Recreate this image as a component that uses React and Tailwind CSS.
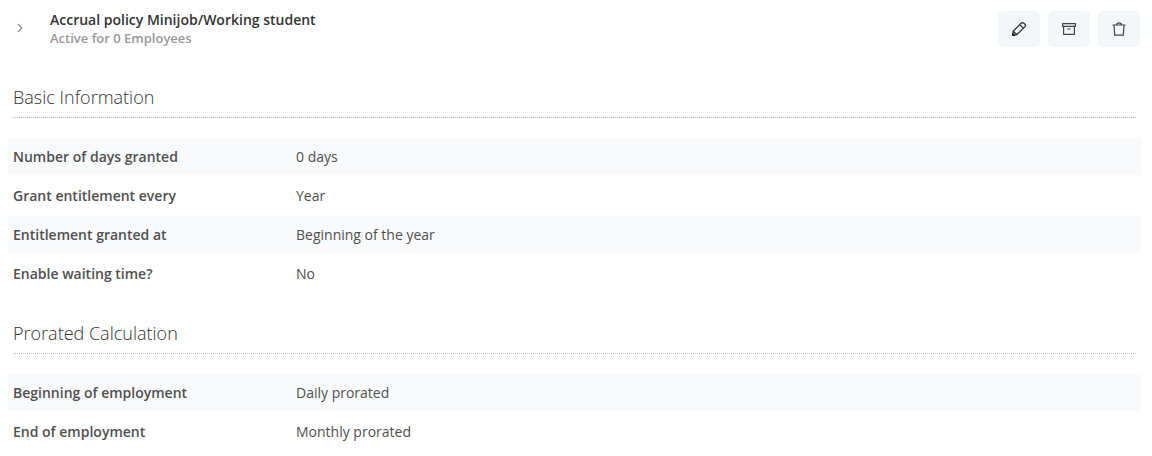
import React from "react";

const sections = [
  {
    title: "Basic Information",
    rows: [
      ["Number of days granted", "0 days"],
      ["Grant entitlement every", "Year"],
      ["Entitlement granted at", "Beginning of the year"],
      ["Enable waiting time?", "No"],
    ],
  },
  {
    title: "Prorated Calculation",
    rows: [
      ["Beginning of employment", "Daily prorated"],
      ["End of employment", "Monthly prorated"],
    ],
  },
];

function ActionButton({ label, children }) {
  return (
    <button type="button" aria-label={label} className="flex h-9 w-[42px] items-center justify-center rounded-[5px] bg-[#f3f7fa] text-[#444]">
      <svg width="16" height="16" viewBox="0 0 16 16" fill="none" stroke="currentColor" strokeWidth="1.2" strokeLinejoin="round" aria-hidden="true">
        {children}
      </svg>
    </button>
  );
}

function Section({ title, rows }) {
  return (
    <section className="mt-[27px]">
      <h2 className="mx-[5px] border-b border-dotted border-[#bbb] pb-2 text-lg leading-6 font-light text-[#333]">{title}</h2>
      <table className="mt-[18px] w-full table-fixed border-separate border-spacing-x-0 border-spacing-y-[2px] text-left text-sm">
        <colgroup>
          <col className="w-[283px]" />
          <col />
        </colgroup>
        <tbody>
          {rows.map(([name, value]) => (
            <tr key={name} className="h-[37px] odd:bg-[#f9fafc]">
              <th scope="row" className="px-[5px] py-0 font-semibold">{name}</th>
              <td className="px-[5px] py-0">{value}</td>
            </tr>
          ))}
        </tbody>
      </table>
    </section>
  );
}

export default function App() {
  return (
    <main className="bg-white pt-[11px] pr-[11px] pl-2 font-['Open_Sans',sans-serif] text-[#505050]">
      <header className="flex items-start justify-between pr-px pb-[11px]">
        <div className="flex">
          <button type="button" aria-label="Expand policy" className="flex h-[34px] w-6 items-center justify-center text-[#888]">
            <svg width="8" height="12" viewBox="0 0 8 12" fill="none" stroke="currentColor" strokeWidth="1.1" aria-hidden="true"><path d="M1.700 1.900L5.800 6L1.700 10.100" /></svg>
          </button>
          <div className="ml-[18px]">
            <h1 className="text-sm leading-[18px] font-semibold text-[#333]">Accrual policy Minijob/Working student</h1>
            <p className="text-[13px] leading-[18px] font-semibold text-[#999]">Active for 0 Employees</p>
          </div>
        </div>
        <div className="flex gap-2">
          <ActionButton label="Edit">
            <g className="text-[#222]" stroke="currentColor">
              <path d="M1.600 14.400L2.300 10.100L10.200 2.200Q11.500 1 12.800 2.200L13.800 3.200Q15 4.500 13.800 5.800L5.900 13.700ZM2.300 10.100L5.900 13.700M8.800 3.600L12.400 7.200" />
              <path d="M1.600 14.400L1.900 12.400L3.600 14.100Z" fill="currentColor" />
            </g>
          </ActionButton>
          <ActionButton label="Archive"><path d="M1.600 2.600h12.800v2.800H1.600zM2.600 5.400v8h10.800v-8M6.300 8h3.400" /></ActionButton>
          <ActionButton label="Delete"><path d="M1.500 4h13M5.500 4Q5.500 1.800 8 1.800T10.500 4M3 4l.7 10.200h8.600L13 4" /></ActionButton>
        </div>
      </header>
      {sections.map((s) => <Section key={s.title} {...s} />)}
    </main>
  );
}
